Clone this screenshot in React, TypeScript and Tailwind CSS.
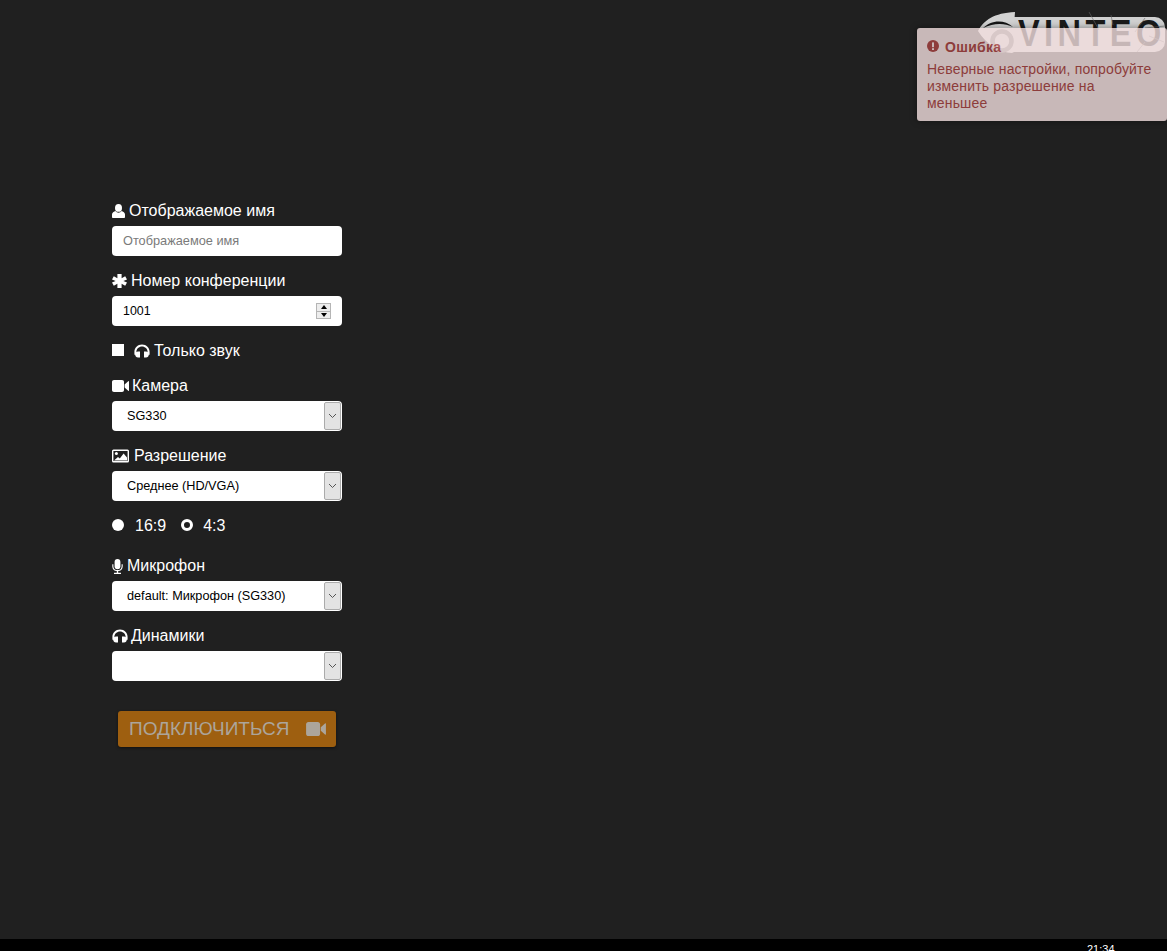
import React from "react";

const F = "font-['Liberation_Sans',Arial,sans-serif]";

function IconUser() {
  return (
    <svg width="13" height="14" viewBox="0 0 13 14" fill="currentColor" className="shrink-0">
      <ellipse cx="6.5" cy="3.9" rx="3.5" ry="3.9" />
      <path d="M0 13V10.4C0 8.7 1.9 7.6 3.5 7.1C4.3 8.1 5.3 8.8 6.5 8.8C7.7 8.8 8.7 8.1 9.5 7.1C11.1 7.6 13 8.7 13 10.4V13C13 13.6 12.5 14 12 14H1C0.5 14 0 13.6 0 13Z" />
    </svg>
  );
}
function IconAsterisk() {
  return (
    <svg width="15" height="14" viewBox="0 0 15 14" fill="currentColor" className="shrink-0">
      <path d="M5.4 0H9.6V4.3L13.2 2.2L15 5.4L11.4 7L15 8.6L13.2 11.8L9.6 9.7V14H5.4V9.7L1.8 11.8L0 8.6L3.6 7L0 5.4L1.8 2.2L5.4 4.3Z" />
    </svg>
  );
}
function IconHeadphones() {
  return (
    <svg width="16" height="14" viewBox="0 0 16 14" fill="currentColor" className="shrink-0">
      <path d="M8 0.6C3.6 0.6 0.4 3.8 0.4 8V10.8H2.4V8C2.4 5 5 2.6 8 2.6C11 2.6 13.6 5 13.6 8V10.8H15.6V8C15.6 3.8 12.4 0.6 8 0.6Z" />
      <path d="M4 7.4H6V13.4H4C2.4 13.4 1.2 12.2 1.2 10.4C1.2 8.6 2.4 7.4 4 7.4Z" />
      <path d="M12 7.4H10V13.4H12C13.6 13.4 14.8 12.2 14.8 10.4C14.8 8.6 13.6 7.4 12 7.4Z" />
    </svg>
  );
}
function IconCamera({ className = "" }: { className?: string }) {
  return (
    <svg width="17" height="12" viewBox="0 0 17 12" fill="currentColor" className={"shrink-0 " + className}>
      <path d="M2 0H10C11.2 0 12 0.8 12 2V10C12 11.2 11.2 12 10 12H2C0.8 12 0 11.2 0 10V2C0 0.8 0.8 0 2 0Z" />
      <path d="M12.6 4.4L16.2 1.2C16.6 0.9 17 1.1 17 1.6V10.4C17 10.9 16.6 11.1 16.2 10.8L12.6 7.6Z" />
    </svg>
  );
}
function IconPicture() {
  return (
    <svg width="17" height="14" viewBox="0 0 17 14" className="shrink-0">
      <rect x="0.7" y="1.2" width="15.6" height="11.6" fill="none" stroke="currentColor" strokeWidth="1.4" rx="0.8" />
      <circle cx="4.4" cy="4.6" r="1.5" fill="currentColor" />
      <path d="M2 11.6L6 8L7.8 9.4L11.6 4.4L15 8.4V11.6Z" fill="currentColor" />
    </svg>
  );
}
function IconMic() {
  return (
    <svg width="11" height="15" viewBox="0 0 11 15" fill="currentColor" className="shrink-0">
      <rect x="2.6" y="0" width="5.8" height="10.2" rx="2.9" />
      <path d="M0.3 5.2H1.4V7.4C1.4 9.7 3.2 11.1 5.5 11.1C7.8 11.1 9.6 9.7 9.6 7.4V5.2H10.7V7.4C10.7 9.9 8.9 11.8 6.2 12.1V13.7H9V15H2V13.7H4.8V12.1C2.1 11.8 0.3 9.9 0.3 7.4Z" />
    </svg>
  );
}
function IconAlert() {
  return (
    <svg width="12" height="12" viewBox="0 0 12 12" className="shrink-0">
      <circle cx="6" cy="6" r="6" fill="currentColor" />
      <rect x="5" y="2.4" width="2" height="4.8" fill="#f2dede" />
      <rect x="5" y="8.2" width="2" height="1.8" fill="#f2dede" />
    </svg>
  );
}

function Label({ icon, text, gap = "gap-[3px]" }: { icon: React.ReactNode; text: string; gap?: string }) {
  return (
    <div className={"flex h-[20px] items-center pt-[2px] text-[16px] leading-[18px] text-white " + gap}>
      {icon}
      <span>{text}</span>
    </div>
  );
}

function Select({ value, pad = "pl-[15px]" }: { value?: string; pad?: string }) {
  return (
    <div className="flex h-[30px] w-[230px] items-stretch rounded-[4px] bg-white">
      <div className={"flex flex-1 items-center pt-[2px] text-[12.7px] text-black " + pad}>{value}</div>
      <div className="m-px flex w-[17px] items-center justify-center rounded-[2px] border border-[#ababab] bg-[#e3e3e3]">
        <svg width="9" height="6" viewBox="0 0 9 6" fill="none" stroke="#555" strokeWidth="1">
          <path d="M1 1L4.5 4.5L8 1" />
        </svg>
      </div>
    </div>
  );
}

function Logo() {
  return (
    <div className="absolute left-[976px] top-[12px] h-[42px] w-[191px] overflow-hidden">
      <div className="absolute left-[37px] top-[5px] h-[35px] w-[152px] rounded-r-[10px] bg-[#d0d0d0]" />
      <svg width="44" height="42" viewBox="0 0 44 42" className="absolute left-0 top-0">
        <path d="M2 19C8 8 18 1 39 0C38 12 38 28 38 40L36 41C24 41 10 32 2 19Z" fill="#d2d2d2" />
        <path d="M7 16C14 9 27 6 37 15C28 11 18 11 7 16Z" fill="#141414" />
        <circle cx="26" cy="29" r="9.5" fill="none" stroke="#707070" strokeWidth="4.5" />
      </svg>
      <span className={"absolute left-[42px] top-[4px] origin-left scale-x-[0.88] text-[37px] font-bold leading-[36px] tracking-[5px] text-[#1a1a1a] " + F}>
        VINTEO
      </span>
      <svg width="80" height="42" viewBox="0 0 80 42" fill="none" stroke="#666" strokeWidth="0.6" className="absolute right-0 top-0">
        <path d="M2 0L12 18M24 3L26 13M58 6L48 20M78 14L58 16M77 30L62 24M50 40L58 30" />
      </svg>
    </div>
  );
}

export default function App() {
  return (
    <div className={"relative flex h-[951px] w-full flex-col overflow-hidden bg-[#202020] " + F}>
      <Logo />

      <div className="absolute left-[917px] top-[28px] h-[93px] w-[250px] rounded-[3px] bg-[#f2dede] px-[10px] pt-[11px] text-[#a94442] opacity-80 shadow-[0_0_6px_rgba(0,0,0,0.5)]">
        <div className="flex h-[17px] items-center gap-[6px] text-[14px] font-bold leading-[17px] tracking-[0.3px]">
          <span className="-mt-[3px]">
            <IconAlert />
          </span>
          <span>Ошибка</span>
        </div>
        <div className="mt-[5px] text-[14px] leading-[17px] tracking-[0.17px]">
          Неверные настройки, попробуйте
          <br />
          изменить разрешение на
          <br />
          меньшее
        </div>
      </div>

      <div className="flex-1 pl-[112px] pt-[200px]">
        <div className="flex w-[230px] flex-col">
          <Label icon={<IconUser />} text="Отображаемое имя" gap="gap-[4px]" />
          <div className="mt-[6px] flex h-[30px] items-center rounded-[4px] bg-white pl-[11px] text-[12.75px] text-[#7a7a7a]">
            Отображаемое имя
          </div>

          <div className="mt-[14px]">
            <Label icon={<IconAsterisk />} text="Номер конференции" gap="gap-[4px]" />
          </div>
          <div className="mt-[6px] flex h-[30px] items-center justify-between rounded-[4px] bg-white pl-[11px] pr-[11px] text-[12.4px] text-black">
            <span>1001</span>
            <div className="flex h-[16px] w-[15px] flex-col border border-[#b5b5b5] bg-[#ededed]">
              <div className="flex flex-1 items-center justify-center border-b border-[#b5b5b5]">
                <div className="h-0 w-0 border-x-[3px] border-b-[4px] border-x-transparent border-b-black" />
              </div>
              <div className="flex flex-1 items-center justify-center">
                <div className="h-0 w-0 border-x-[3px] border-t-[4px] border-x-transparent border-t-black" />
              </div>
            </div>
          </div>

          <div className="mt-[14px] flex h-[20px] items-center pt-[2px] text-[16px] leading-[18px] text-white">
            <div className="-mt-[2px] h-[12px] w-[12px] bg-white" />
            <span className="ml-[10px]">
              <IconHeadphones />
            </span>
            <span className="ml-[4px]">Только звук</span>
          </div>

          <div className="mt-[15px]">
            <Label icon={<IconCamera />} text="Камера" />
          </div>
          <div className="mt-[6px]">
            <Select value="SG330" />
          </div>

          <div className="mt-[14px]">
            <Label icon={<IconPicture />} text="Разрешение" gap="gap-[5px]" />
          </div>
          <div className="mt-[6px]">
            <Select value="Среднее (HD/VGA)" />
          </div>

          <div className="mt-[14px] flex h-[20px] items-center pt-[2px] text-[16px] leading-[18px] text-white">
            <div className="-mt-[2px] h-[12px] w-[12px] rounded-full bg-white" />
            <span className="ml-[11px]">16:9</span>
            <div className="-mt-[2px] ml-[15px] h-[12px] w-[12px] rounded-full border-[3px] border-white" />
            <span className="ml-[10px]">4:3</span>
          </div>

          <div className="mt-[20px]">
            <Label icon={<IconMic />} text="Микрофон" gap="gap-[4px]" />
          </div>
          <div className="mt-[6px]">
            <Select value="default: Микрофон (SG330)" />
          </div>

          <div className="mt-[14px]">
            <Label icon={<IconHeadphones />} text="Динамики" gap="gap-[3px]" />
          </div>
          <div className="mt-[6px]">
            <Select />
          </div>

          <div className="ml-[6px] mt-[30px] flex h-[36px] w-[218px] items-center justify-between rounded-[3px] bg-[#9e5f10] pl-[11px] pr-[10px] text-[19px] text-[#aca59b] shadow-[0_1px_3px_rgba(0,0,0,0.5)]">
            <span>ПОДКЛЮЧИТЬСЯ</span>
            <IconCamera className="h-[14px] w-[20px]" />
          </div>
        </div>
      </div>

      <div className="relative h-[12px] shrink-0 overflow-hidden bg-black">
        <div className="absolute left-[1087px] top-[4px] text-[11px] leading-[13px] text-white">21:34</div>
      </div>
    </div>
  );
}
